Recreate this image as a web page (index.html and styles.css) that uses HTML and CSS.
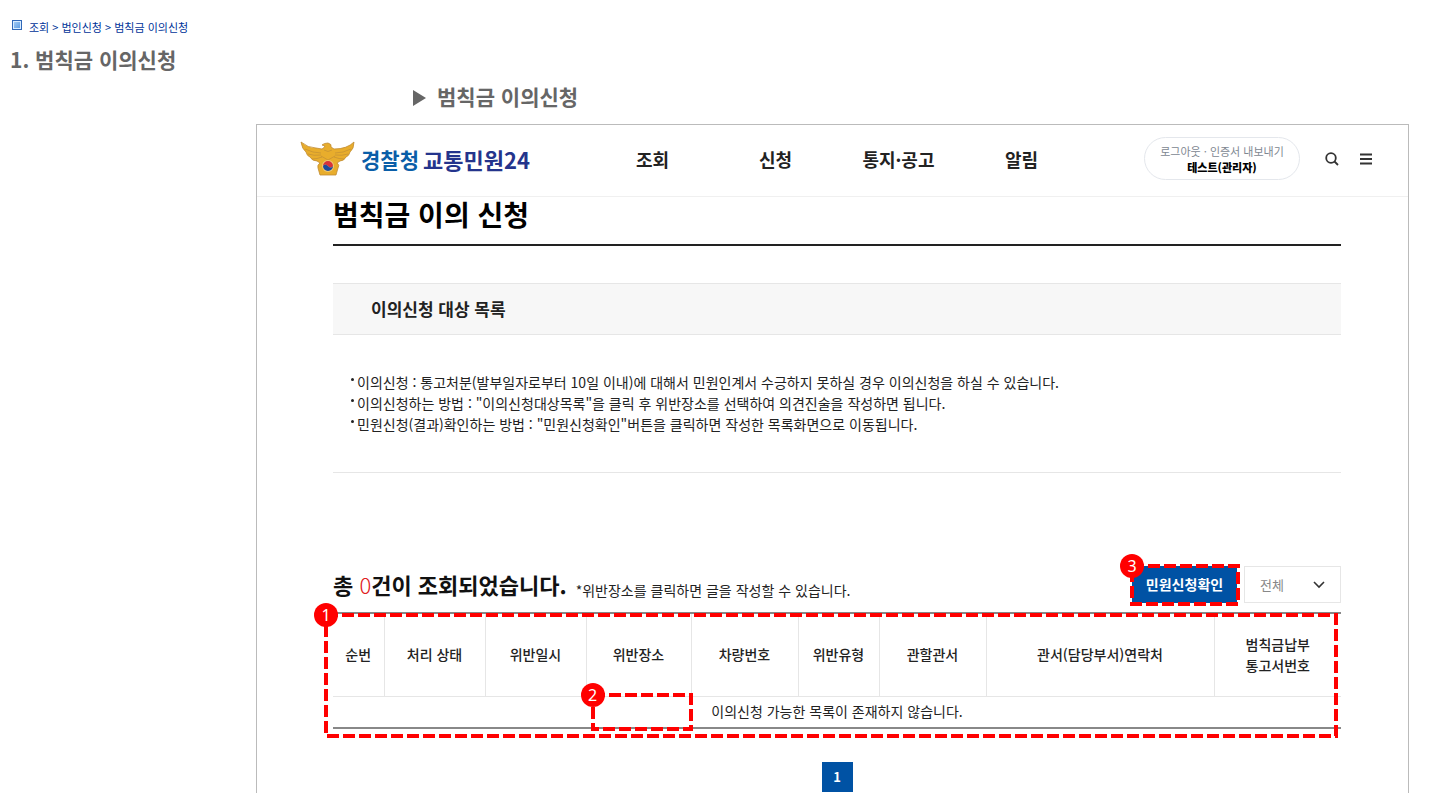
FILE: index.html
```html
<!DOCTYPE html>
<html lang="ko">
<head>
    <meta charset="UTF-8">
    <title>범칙금 이의신청</title>
    <link rel="stylesheet" href="styles.css">
</head>
<body>
    <div class="breadcrumb">
        <span class="breadcrumb-icon"></span>
        <span>조회 &gt; 법인신청 &gt; 범칙금 이의신청</span>
    </div>
    <h1 class="guide-title">1. 범칙금 이의신청</h1>
    <h2 class="guide-subtitle"><span class="arrow"></span>범칙금 이의신청</h2>

    <div class="frame">
        <header class="header">
            <a href="#" class="logo">
                <svg class="eagle" width="56" height="36" viewBox="0 0 56 36">
                    <path d="M1 1 Q8 7 16 7 L22 8 Q24 7 25 5 L22 4 Q24 2 28 2 Q32 3 31 6 L34 8 Q47 8 54 1 Q54 8 50 11 Q49 15 46 16 Q44 20 40 20 L37 22 Q40 24 38 27 L36 34 H20 L18 27 Q17 24 20 22 L17 20 Q12 20 10 16 Q7 15 6 11 Q2 8 1 1Z" fill="#e8ad2c" stroke="#c08c34" stroke-width="0.8"/>
                    <path d="M5 8 Q13 12 21 12 M8 13 Q14 15 21 14 M12 18 Q17 18 22 16 M51 8 Q43 12 35 12 M48 13 Q42 15 35 14 M44 18 Q39 18 34 16 M24 9 Q28 12 32 9 M21 15 L28 19 L35 15" fill="none" stroke="#c28f35" stroke-width="0.7"/>
                    <circle cx="28" cy="25" r="6" fill="#edc878"/>
                    <path d="M23 25 A5 5 0 0 1 33 25 Q31 28 28 25 Q25 22 23 25Z" fill="#d8323a"/>
                    <path d="M23 25 A5 5 0 0 0 33 25 Q31 28 28 25 Q25 22 23 25Z" fill="#1c4b9c"/>
                </svg>
                <span class="logo-text"><span class="logo-police">경찰청</span> <span>교통민원24</span></span>
            </a>
            <nav class="nav">
                <a href="#">조회</a>
                <a href="#">신청</a>
                <a href="#">통지·공고</a>
                <a href="#">알림</a>
            </nav>
            <div class="tools">
                <div class="user">
                    <div class="user-links"><a href="#">로그아웃</a> · <a href="#">인증서 내보내기</a></div>
                    <strong>테스트(관리자)</strong>
                </div>
                <button class="icon-button" aria-label="검색">
                    <svg width="14" height="14" viewBox="0 0 14 14" fill="none" stroke="#333" stroke-width="1.8">
                        <circle cx="6" cy="6" r="4.8"/>
                        <path d="M9.5 9.5 L13 13"/>
                    </svg>
                </button>
                <button class="icon-button" aria-label="메뉴">
                    <svg width="12" height="12" viewBox="0 0 12 12" fill="none" stroke="#333" stroke-width="1.8">
                        <path d="M0 1.500H12M0 6H12M0 10.500H12"/>
                    </svg>
                </button>
            </div>
        </header>

        <main class="content">
            <h2 class="page-title">범칙금 이의 신청</h2>
            <h3 class="section-title">이의신청 대상 목록</h3>
            <ul class="notice">
                <li>이의신청 : 통고처분(발부일자로부터 10일 이내)에 대해서 민원인계서 수긍하지 못하실 경우 이의신청을 하실 수 있습니다.</li>
                <li>이의신청하는 방법 : "이의신청대상목록"을 클릭 후 위반장소를 선택하여 의견진술을 작성하면 됩니다.</li>
                <li>민원신청(결과)확인하는 방법 : "민원신청확인"버튼을 클릭하면 작성한 목록화면으로 이동됩니다.</li>
            </ul>

            <div class="summary">
                <p class="total">총 <em>0</em>건이 조회되었습니다.</p>
                <p class="hint">*위반장소를 클릭하면 글을 작성할 수 있습니다.</p>
                <div class="actions">
                    <div class="confirm">
                        <button class="confirm-button">민원신청확인</button>
                        <div class="callout callout-confirm">
                            <svg><rect/></svg>
                            <span class="badge">3</span>
                        </div>
                    </div>
                    <div class="filter">
                        <select aria-label="처리 상태">
                            <option>전체</option>
                        </select>
                        <svg class="chevron" width="12" height="8" viewBox="0 0 12 8" fill="none" stroke="#333" stroke-width="1.6">
                            <path d="M1 1 L6 6 L11 1"/>
                        </svg>
                    </div>
                </div>
            </div>

            <div class="table-wrap">
                <table class="list">
                    <colgroup>
                        <col class="col-no">
                        <col class="col-state">
                        <col class="col-date">
                        <col class="col-place">
                        <col class="col-car">
                        <col class="col-type">
                        <col class="col-office">
                        <col class="col-tel">
                        <col class="col-notice">
                    </colgroup>
                    <thead>
                        <tr>
                            <th>순번</th>
                            <th>처리 상태</th>
                            <th>위반일시</th>
                            <th class="place">위반장소
                                <div class="callout callout-place">
                                    <svg><rect/></svg>
                                    <span class="badge">2</span>
                                </div>
                            </th>
                            <th>차량번호</th>
                            <th>위반유형</th>
                            <th>관할관서</th>
                            <th>관서(담당부서)연락처</th>
                            <th>범칙금납부<br>통고서번호</th>
                        </tr>
                    </thead>
                    <tbody>
                        <tr>
                            <td colspan="9">이의신청 가능한 목록이 존재하지 않습니다.</td>
                        </tr>
                    </tbody>
                </table>
                <div class="callout callout-list">
                    <svg><rect/></svg>
                    <span class="badge">1</span>
                </div>
            </div>

            <div class="pager"><a href="#">1</a></div>
        </main>
    </div>
</body>
</html>
```
FILE: styles.css
```css
* {
    box-sizing: border-box;
}
body {
    margin: 0;
    min-height: 100vh;
    display: flex;
    flex-direction: column;
    background: #fff;
    color: #222;
    font-family: "Noto Sans CJK KR", sans-serif;
}
h1, h2, h3, p, ul {
    margin: 0;
    padding: 0;
}
a {
    color: inherit;
    text-decoration: none;
}
button, select {
    font-family: inherit;
}

/* 안내 제목 */
.breadcrumb {
    display: flex;
    align-items: center;
    gap: 7px;
    padding: 17px 12px 0;
    font-size: 11px;
    line-height: 20px;
    color: #003399;
}
.breadcrumb-icon {
    width: 10px;
    height: 10px;
    margin-bottom: 5px;
    border: 1px solid #3068b8;
    background: linear-gradient(135deg, #a8d0f8, #5898e0);
    box-shadow: inset 0 0 0 1px #d8ecff;
}
.guide-title,
.guide-subtitle {
    font-size: 21px;
    color: #666;
}
.guide-title {
    padding: 6px 10px 0;
    line-height: 32px;
}
.guide-subtitle {
    display: flex;
    align-items: center;
    gap: 11px;
    padding: 5px 0 12px 413px;
    line-height: 32px;
}
.arrow {
    margin-top: 3px;
    border-left: 13px solid #666;
    border-top: 8px solid transparent;
    border-bottom: 8px solid transparent;
}

/* 화면 */
.frame {
    flex: 1;
    margin: 0 23px 0 256px;
    border: 1px solid #bbb;
    border-bottom: 0;
}
.header {
    display: flex;
    align-items: center;
    justify-content: space-between;
    height: 72px;
    padding: 0 36px 4px 43px;
    border-bottom: 1px solid #f0f0f0;
}
.logo {
    display: flex;
    align-items: center;
    gap: 5px;
}
.logo-text {
    display: flex;
    align-items: center;
    gap: 4px;
    font-size: 22px;
    font-weight: 700;
    color: #24348c;
}
.logo-police {
    font-size: 21px;
    color: #0a5ea8;
}
.nav {
    display: grid;
    grid-template-columns: repeat(4, 123px);
    font-size: 18px;
    font-weight: 700;
    text-align: center;
}
.tools {
    display: flex;
    align-items: center;
    gap: 21px;
}
.user {
    width: 156px;
    height: 43px;
    padding-top: 5px;
    border: 1px solid #e4e7ec;
    border-radius: 22px;
    font-size: 11px;
    line-height: 16px;
    text-align: center;
}
.user-links {
    color: #808791;
}
.user strong {
    display: block;
    font-weight: 900;
    color: #000;
}
.icon-button {
    display: flex;
    padding: 0;
    border: 0;
    background: none;
}
.user + .icon-button {
    margin-left: 4px;
}

.content {
    padding: 0 67px 0 76px;
}
.page-title {
    height: 49px;
    border-bottom: 2px solid #222;
    font-size: 28px;
    font-weight: 700;
    line-height: 34px;
    color: #000;
}
.section-title {
    margin-top: 37px;
    padding: 0 38px;
    border: solid #e6e6e6;
    border-width: 1px 0;
    background: #f7f7f7;
    font-size: 17px;
    font-weight: 700;
    line-height: 50px;
}
.notice {
    padding: 37px 18px;
    border-bottom: 1px solid #e6e6e6;
    font-size: 14px;
    line-height: 21px;
    list-style: none;
}
.notice li {
    display: flex;
    gap: 3px;
}
.notice li::before {
    content: "";
    width: 3px;
    height: 3px;
    margin-top: 6px;
    border-radius: 50%;
    background: #222;
}

.summary {
    display: flex;
    align-items: center;
    margin-top: 87px;
    height: 48px;
}
.total {
    font-size: 22px;
    font-weight: 700;
    color: #111;
}
.total em {
    font-style: normal;
    font-weight: 300;
    color: #e02020;
}
.hint {
    margin: 12px 0 0 9px;
    font-size: 14px;
}
.actions {
    display: flex;
    gap: 7px;
    margin-left: auto;
}
.confirm {
    position: relative;
}
.confirm-button {
    width: 105px;
    height: 37px;
    padding: 0;
    border: 0;
    background: #0052a4;
    color: #fff;
    font-size: 14px;
    font-weight: 700;
}
.filter {
    position: relative;
}
.filter select {
    appearance: none;
    width: 97px;
    height: 37px;
    padding: 0 15px;
    border: 1px solid #e6e6e6;
    background: #fff;
    color: #888;
    font-size: 13px;
}
.chevron {
    position: absolute;
    top: 15px;
    right: 16px;
    pointer-events: none;
}

/* 목록 */
.table-wrap {
    position: relative;
    margin-top: 4px;
}
.list {
    width: 100%;
    table-layout: fixed;
    border-collapse: collapse;
    border-top: 2px solid #888;
    border-bottom: 2px solid #888;
    font-size: 14px;
    line-height: 21px;
    text-align: center;
}
.list th {
    height: 83px;
    padding: 0;
    border-left: 1px solid #e6e6e6;
    border-bottom: 1px solid #e6e6e6;
    font-weight: 500;
}
.list th:first-child {
    border-left: 0;
}
.list td {
    height: 32px;
    padding: 0;
}
.list .place {
    position: relative;
}
.col-no { width: 51px; }
.col-state { width: 101px; }
.col-date { width: 101px; }
.col-place { width: 105px; }
.col-car { width: 107px; }
.col-type { width: 81px; }
.col-office { width: 107px; }
.col-notice { width: 127px; }

.pager {
    display: flex;
    justify-content: center;
    margin-top: 33px;
}
.pager a {
    width: 31px;
    background: #0052a4;
    color: #fff;
    font-size: 13px;
    font-weight: 700;
    line-height: 30px;
    text-align: center;
}

/* 빨간 점선 안내 표시 */
.callout {
    position: absolute;
    pointer-events: none;
}
.callout svg {
    display: block;
    width: 100%;
    height: 100%;
}
.callout rect {
    x: 2px;
    y: 2px;
    width: calc(100% - 4px);
    height: calc(100% - 4px);
    fill: none;
    stroke: #f00;
    stroke-width: 4px;
    stroke-dasharray: 12 4;
}
.callout-list {
    top: 1px;
    right: 3px;
    bottom: -9px;
    left: -9px;
}
.callout-place {
    top: calc(100% - 3px);
    right: -2px;
    left: 4px;
    height: 38px;
}
.callout-confirm {
    top: -2px;
    right: -3px;
    bottom: -3px;
    left: -2px;
}
.badge {
    position: absolute;
    top: -10px;
    left: -10px;
    width: 24px;
    height: 24px;
    border-radius: 50%;
    background: #f00;
    color: #fff;
    font-family: "Noto Sans", sans-serif;
    font-size: 16px;
    font-weight: 400;
    line-height: 24px;
    text-align: center;
}
```
